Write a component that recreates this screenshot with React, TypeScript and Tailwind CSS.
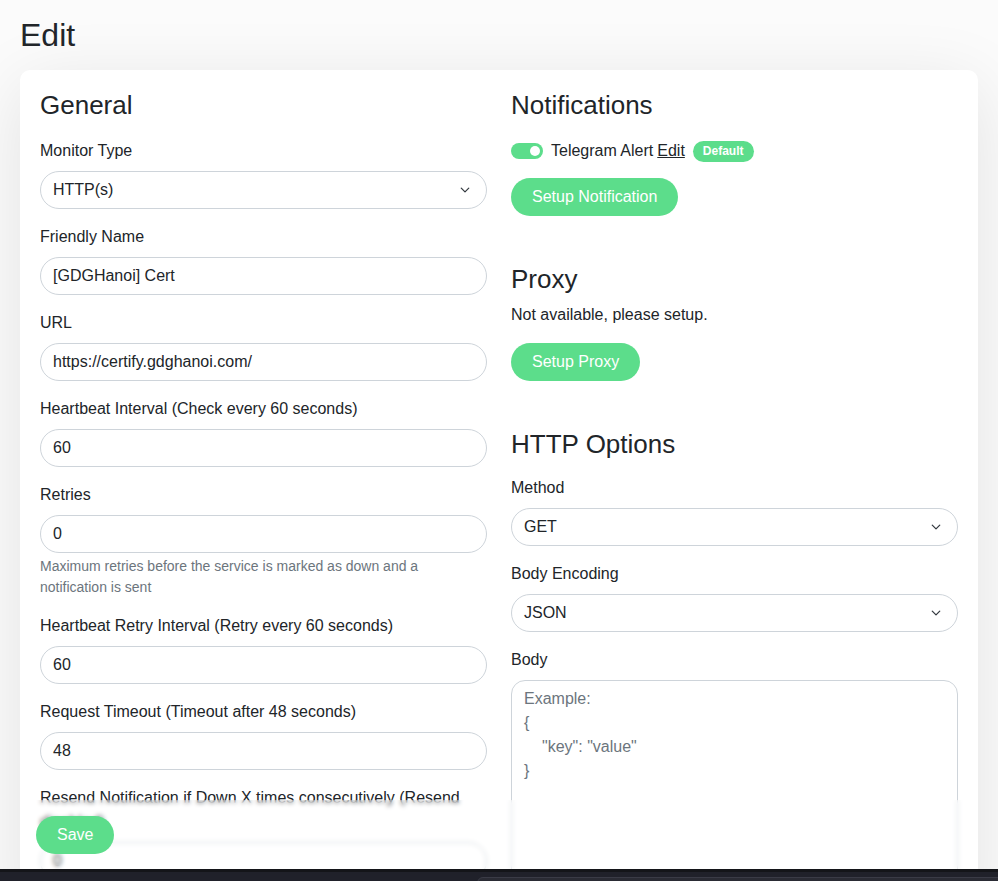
import type { ReactNode } from "react";

const font = { fontFamily: '"Liberation Sans", Arial, sans-serif' };

function Chevron() {
  return (
    <svg viewBox="0 0 16 16" className="h-[10px] w-[10px]" fill="none">
      <path d="m2 5 6 6 6-6" stroke="#343a40" strokeWidth="2" strokeLinecap="round" strokeLinejoin="round" />
    </svg>
  );
}

function Field({ label, children, help }: { label: string; children: ReactNode; help?: string }) {
  return (
    <div className="mb-4">
      <div className="mb-2 text-base leading-6 text-[#212529]">{label}</div>
      {children}
      {help && <div className="mt-[3px] text-sm leading-[21px] text-[#6c757d]">{help}</div>}
    </div>
  );
}

function Input({ value }: { value: string }) {
  return (
    <div className="flex h-[38px] items-center rounded-full border border-[#ced4da] bg-white px-3 text-base text-[#212529]">
      {value}
    </div>
  );
}

function Select({ value }: { value: string }) {
  return (
    <div className="flex h-[38px] items-center justify-between rounded-full border border-[#ced4da] bg-white pl-3 pr-4 text-base text-[#212529]">
      <span>{value}</span>
      <Chevron />
    </div>
  );
}

function GreenButton({ children }: { children: ReactNode }) {
  return (
    <button className="h-[38px] rounded-full bg-[#5cdd8b] px-[21px] text-base text-white">{children}</button>
  );
}

export default function App() {
  return (
    <div className="flex h-[881px] flex-col overflow-hidden bg-white" style={font}>
      <main className="relative flex-1 overflow-hidden bg-[#fbfbfb]">
        <div className="px-5 pt-4">
          <h1 className="mb-4 text-[32px] leading-[38px] text-[#212529]">Edit</h1>

          <div className="rounded-[10px] bg-white px-5 pt-5 shadow-[0_15px_70px_rgba(0,0,0,0.1)]">
            <div className="grid grid-cols-2 gap-x-6">
              {/* left column */}
              <div>
                <h2 className="mb-[18px] text-[26px] leading-[31px] text-[#212529]">General</h2>
                <Field label="Monitor Type">
                  <Select value="HTTP(s)" />
                </Field>
                <Field label="Friendly Name">
                  <Input value="[GDGHanoi] Cert" />
                </Field>
                <Field label="URL">
                  <Input value="https://certify.gdghanoi.com/" />
                </Field>
                <Field label="Heartbeat Interval (Check every 60 seconds)">
                  <Input value="60" />
                </Field>
                <Field
                  label="Retries"
                  help="Maximum retries before the service is marked as down and a notification is sent"
                >
                  <Input value="0" />
                </Field>
                <Field label="Heartbeat Retry Interval (Retry every 60 seconds)">
                  <Input value="60" />
                </Field>
                <Field label="Request Timeout (Timeout after 48 seconds)">
                  <Input value="48" />
                </Field>
                <Field label="Resend Notification if Down X times consecutively (Resend disabled)">
                  <Input value="0" />
                </Field>
              </div>

              {/* right column */}
              <div>
                <h2 className="mb-[18px] text-[26px] leading-[31px] text-[#212529]">Notifications</h2>
                <div className="flex h-6 items-center text-base text-[#212529]">
                  <div className="mr-2 flex h-4 w-8 items-center justify-end rounded-full bg-[#5cdd8b] pr-[3px]">
                    <div className="h-[10px] w-[10px] rounded-full bg-white" />
                  </div>
                  <span>Telegram Alert</span>
                  <span className="ml-1 underline">Edit</span>
                  <span className="ml-2 flex h-[21px] items-center rounded-full bg-[#5cdd8b] px-[10px] text-xs font-bold text-white">
                    Default
                  </span>
                </div>
                <div className="mt-[15px]">
                  <GreenButton>Setup Notification</GreenButton>
                </div>

                <h2 className="mb-2 mt-12 text-[26px] leading-[31px] text-[#212529]">Proxy</h2>
                <div className="text-base leading-6 text-[#212529]">Not available, please setup.</div>
                <div className="mt-4">
                  <GreenButton>Setup Proxy</GreenButton>
                </div>

                <h2 className="mb-4 mt-12 text-[26px] leading-[31px] text-[#212529]">HTTP Options</h2>
                <Field label="Method">
                  <Select value="GET" />
                </Field>
                <Field label="Body Encoding">
                  <Select value="JSON" />
                </Field>
                <Field label="Body">
                  <div className="h-[220px] rounded-[14px] border border-[#ced4da] bg-white px-3 py-[6px] text-base leading-6 text-[#6c757d]">
                    <div>Example:</div>
                    <div>{"{"}</div>
                    <div className="pl-[18px]">"key": "value"</div>
                    <div>{"}"}</div>
                  </div>
                </Field>
              </div>
            </div>
          </div>
        </div>

        {/* sticky save bar */}
        <div className="absolute bottom-0 left-5 right-5 h-[69px] bg-white/20 px-4 pt-4 backdrop-blur-[2px]">
          <GreenButton>Save</GreenButton>
        </div>
      </main>

      <div className="relative h-3 border-t-[3px] border-[#141519] bg-[#20212a]">
        <div className="absolute left-[477px] top-[5px] h-[10px] w-[560px] rounded-tl-md border border-[#3a3b46] bg-[#2a2b34]" />
      </div>
    </div>
  );
}
